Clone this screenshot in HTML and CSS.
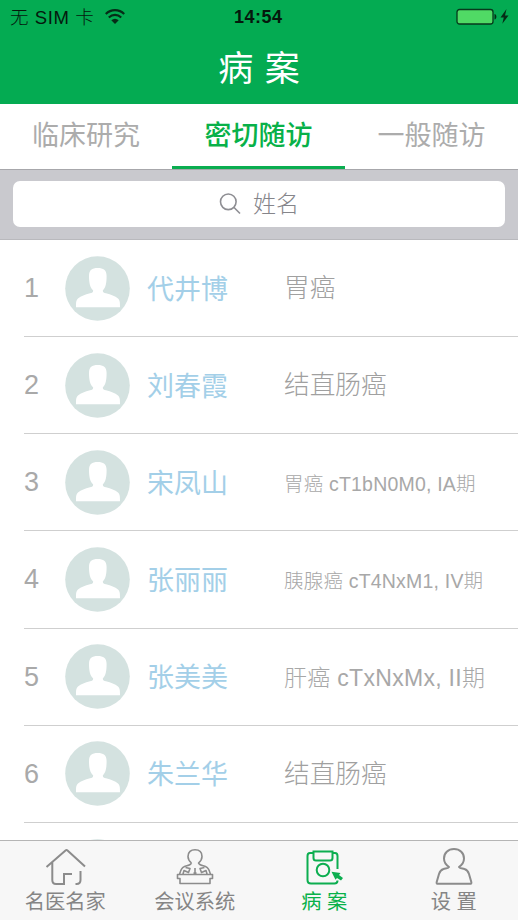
FILE: index.html
```html
<!DOCTYPE html>
<html lang="zh-CN">
<head>
	<meta charset="UTF-8">
	<title>病案</title>
	<link rel="stylesheet" href="styles.css">
</head>
<body>
	<svg class="defs">
		<symbol id="avatar" viewBox="0 0 65 65">
			<circle cx="32.5" cy="32.5" r="32.3" fill="#d4e2e0"/>
			<path fill="#fff" d="M24 20C24 14 27 12 32.700 12S41.600 14 41.600 20C41.600 27 40.800 31.500 37.800 34.500C37.800 36.500 39 36.700 41 37.300C46 38.700 50 40 53 42.500C55 44.500 55 46.500 55 51.300H11C11 46.500 11 44.500 13 42.500C16 40 20 38.700 25 37.300C27 36.700 28.200 36.500 28.200 34.500C25 31.500 24 27 24 20Z"/>
		</symbol>
	</svg>
	<div class="app">
		<div class="header">
			<div class="status">
				<span class="carrier">无 SIM 卡</span>
				<svg class="wifi" width="20" height="15" viewBox="0 0 20 15" fill="none" stroke="#062c17" stroke-width="2.2">
					<path d="M.8 5C6 -.1 14 -.1 19.200 5M3.800 8.500C7.500 5 12.500 5 16.200 8.500"/>
					<path d="M6.300 11.300Q10 8 13.700 11.300L10 15Z" fill="#062c17" stroke="none"/>
				</svg>
				<span class="time">14:54</span>
				<svg class="battery" width="54" height="18" viewBox="0 0 54 18">
					<rect x="1" y="1.500" width="36" height="14.500" rx="2.500" fill="#50da65" stroke="#07391c" stroke-width="1.300"/>
					<path d="M38.500 6C41 6.500 41 11 38.500 11.500Z" fill="#062c17"/>
					<path d="M50.500 1L44.500 9.500H47.800L46.300 15.800L52.500 7.500H49Z" fill="#062c17"/>
				</svg>
			</div>
			<h1>病 案</h1>
		</div>
		<div class="tabs">
			<div class="tab">临床研究</div>
			<div class="tab current">密切随访</div>
			<div class="tab">一般随访</div>
		</div>
		<div class="search">
			<div class="field">
				<svg width="22" height="22" viewBox="0 0 22 22" fill="none" stroke="#8e8e93" stroke-width="1.600">
					<circle cx="9.300" cy="8.800" r="7.800"/>
					<path d="M14.800 14.300L21 20.500"/>
				</svg>
				<span>姓名</span>
			</div>
		</div>
		<ul class="list">
			<li><span class="no">1</span><svg class="avatar"><use href="#avatar"/></svg><span class="name">代井博</span><span class="disease">胃癌</span></li>
			<li><span class="no">2</span><svg class="avatar"><use href="#avatar"/></svg><span class="name">刘春霞</span><span class="disease">结直肠癌</span></li>
			<li><span class="no">3</span><svg class="avatar"><use href="#avatar"/></svg><span class="name">宋凤山</span><span class="disease small">胃癌 cT1bN0M0, IA期</span></li>
			<li><span class="no">4</span><svg class="avatar"><use href="#avatar"/></svg><span class="name">张丽丽</span><span class="disease small">胰腺癌 cT4NxM1, IV期</span></li>
			<li><span class="no">5</span><svg class="avatar"><use href="#avatar"/></svg><span class="name">张美美</span><span class="disease medium">肝癌 cTxNxMx, II期</span></li>
			<li><span class="no">6</span><svg class="avatar"><use href="#avatar"/></svg><span class="name">朱兰华</span><span class="disease">结直肠癌</span></li>
			<li><span class="no"></span><svg class="avatar"><use href="#avatar"/></svg></li>
		</ul>
		<div class="nav">
			<div class="item">
				<svg width="42" height="40" viewBox="-1 0 42 40" fill="none" stroke="#8c8c8c" stroke-width="2">
					<path d="M1.500 20L20.500 3.500Q21.500 2.600 22.500 3.500L40 19.500M7.300 15.500V33Q7.300 37 11 37H19V27H27M35.500 24V33Q35.500 37 31.500 37H30.500"/>
				</svg>
				<span>名医名家</span>
			</div>
			<div class="item">
				<svg width="42" height="40" viewBox="-1 0 42 40" fill="none" stroke="#8c8c8c" stroke-width="1.600" stroke-linejoin="round">
					<path d="M17.500 16C15 14 14 11.500 14 9.500C14 5 17 2.800 21 2.800S28 5 28 9.500C28 11.500 27 14 24.500 16C25.500 18.500 29 18.500 32 19.800C35 21 35.500 24 36.500 27.500M17.500 16C16.500 18.500 13 18.500 10 19.800C7 21 6.500 24 5.500 27.500"/>
					<path d="M3.500 27.500H38.500V31.500H36V36.500H6V31.500H3.500ZM9 27L10 23.500L14.500 25.500L16 21.500L11.500 20.500M33 27L32 23.500L27.500 25.500L26 21.500L30.500 20.500M21 21V27M19.500 26H22.500"/>
				</svg>
				<span>会议系统</span>
			</div>
			<div class="item current">
				<svg width="42" height="40" viewBox="0 0 42 40" fill="none" stroke="#0cae50" stroke-width="2">
					<path d="M10 6H7Q4.500 6 4.500 9V33Q4.500 36.500 8 36.500H31.500Q34.500 36.500 34.500 33.500M30 6H32Q34.500 6 34.500 9V22M10.500 4.500H29.500V11Q29.500 13.500 27 13.500H13Q10.500 13.500 10.500 11Z"/>
					<circle cx="20" cy="23" r="6.300"/>
					<path d="M28.500 24.800L37.500 26L36 28L40 31L38 33.500L34 31L32.500 32.800Z" fill="#0cae50" stroke="none"/>
				</svg>
				<span>病 案</span>
			</div>
			<div class="item">
				<svg width="42" height="40" viewBox="-1 0 42 40" fill="none" stroke="#8c8c8c" stroke-width="2" stroke-linejoin="round">
					<path d="M16 20C12.500 17.500 11 14.800 11 11.500C11 6 15 2 21 2S31 6 31 11.500C31 14.800 29.500 17.500 26 20C27 21.800 29.500 21.300 31.500 22C34 22.800 35 24 36 27L38.300 35Q38.800 36.800 37 36.800H5Q3.200 36.800 3.700 35L6 27C7 24 8 22.800 10.500 22C12.500 21.300 15 21.800 16 20Z"/>
				</svg>
				<span>设 置</span>
			</div>
		</div>
	</div>
</body>
</html>
```
FILE: styles.css
```css
* {
	margin: 0;
	padding: 0;
	box-sizing: border-box;
}
body {
	font-family: "Liberation Sans", "Noto Sans CJK SC", sans-serif;
	font-weight: 300;
}
.defs {
	display: none;
}
.app {
	width: 518px;
	height: 920px;
	display: flex;
	flex-direction: column;
	overflow: hidden;
	background-color: #fff;
}
.header {
	height: 104px;
	flex: none;
	background-color: #04ab52;
}
.status {
	height: 34px;
	padding: 0 8px 0 10px;
	display: grid;
	grid-template-columns: 86px 120px 1fr 54px;
	column-gap: 9px;
	align-items: center;
	font-size: 18px;
	color: #05180d;
}
.carrier {
	white-space: nowrap;
	padding-bottom: 3px;
	font-size: 18.5px;
	letter-spacing: 0.6px;
}
.wifi {
	position: relative;
	top: -1px;
}
.time {
	font-size: 18px;
	font-weight: bold;
	letter-spacing: 0.5px;
}
h1 {
	height: 70px;
	line-height: 69px;
	text-align: center;
	font-size: 35px;
	font-weight: 400;
	word-spacing: 2px;
	color: #fff;
}
.tabs {
	height: 65px;
	flex: none;
	display: grid;
	grid-template-columns: 172px 173px 173px;
}
.tab {
	line-height: 65px;
	text-align: center;
	font-size: 27px;
	font-weight: 400;
	color: #acacac;
}
.tab.current {
	height: 65px;
	border-bottom: 3px solid #0aad50;
	color: #08b149;
	font-weight: 500;
}
.search {
	height: 71px;
	flex: none;
	padding: 11px 13px 12px;
	border-top: 1px solid #a7a7ab;
	border-bottom: 1px solid #b9b9bd;
	background-color: #c9c9ce;
}
.field {
	height: 46px;
	display: flex;
	align-items: center;
	justify-content: center;
	gap: 12px;
	border-radius: 7px;
	background-color: #fff;
	font-size: 23px;
	color: #85858a;
}
.field span {
	padding-bottom: 4px;
}
.list {
	flex: 1;
	min-height: 0;
	overflow: hidden;
	list-style: none;
}
li {
	height: 97.2px;
	margin-left: 24px;
	display: flex;
	align-items: center;
	border-bottom: 1px solid #cfcfcf;
}
li:first-child {
	height: 97px;
}
.no {
	width: 41px;
	padding-top: 1px;
	font-size: 27px;
	color: #a9a9a9;
}
.avatar {
	width: 65px;
	height: 65px;
	margin-right: 17px;
}
.name {
	width: 137px;
	padding-bottom: 2px;
	font-size: 27px;
	font-weight: 400;
	color: #a3cfe8;
}
.disease {
	padding-bottom: 5px;
	white-space: nowrap;
	font-size: 25.7px;
	color: #a0a0a0;
}
.disease.small {
	padding-bottom: 0;
	font-size: 19.5px;
	letter-spacing: 0.2px;
	color: #a8a8a8;
}
.disease.medium {
	padding-bottom: 2px;
	font-size: 23px;
	letter-spacing: 0.3px;
	color: #a8a8a8;
}
.nav {
	height: 80px;
	flex: none;
	padding-top: 6px;
	display: grid;
	grid-template-columns: repeat(4, 1fr);
	border-top: 1px solid #b5b5b5;
	background-color: #f7f7f7;
}
.item {
	display: flex;
	flex-direction: column;
	align-items: center;
	font-size: 20.3px;
	font-weight: 400;
	line-height: 30px;
	color: #858585;
}
.item span {
	padding-left: 1px;
}
.item.current {
	color: #08b149;
}
```
